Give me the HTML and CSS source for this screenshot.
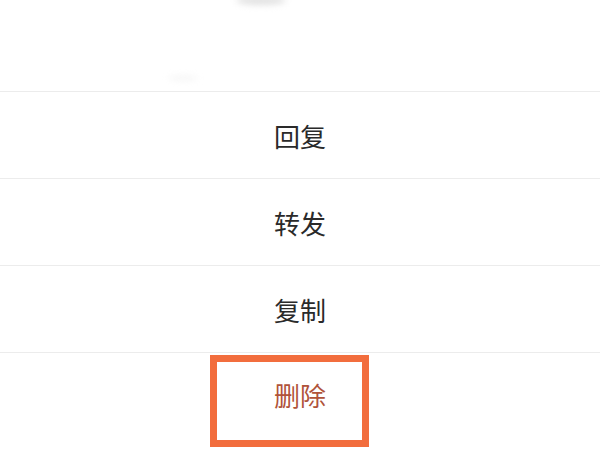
FILE: index.html
```html
<!DOCTYPE html>
<html lang="zh">
<head>
<meta charset="utf-8">
<link rel="stylesheet" href="styles.css">
</head>
<body>
<div class="sheet">
  <div class="top">
    <div class="smudge smudge-a"></div>
    <div class="smudge smudge-b"></div>
  </div>
  <div class="menu">
    <div class="item">回复</div>
    <div class="item">转发</div>
    <div class="item">复制</div>
    <div class="item danger">删除</div>
  </div>
  <div class="highlight"></div>
</div>
</body>
</html>
```

FILE: styles.css
```css
html, body {
  margin: 0;
  padding: 0;
  background: #ffffff;
}
.sheet {
  position: relative;
  width: 600px;
  height: 450px;
  overflow: hidden;
  background: #ffffff;
  font-family: "Noto Sans CJK SC", "Noto Sans", sans-serif;
}
.top {
  position: relative;
  height: 91px;
}
.smudge {
  position: absolute;
  border-radius: 50%;
  filter: blur(3px);
}
.smudge-a {
  left: 236px;
  top: -4px;
  width: 50px;
  height: 9px;
  background: #e2e2e2;
}
.smudge-b {
  left: 168px;
  top: 76px;
  width: 30px;
  height: 4px;
  background: #f3f3f3;
}
.menu {
  display: flex;
  flex-direction: column;
}
.item {
  height: 86px;
  border-top: 1px solid #ececec;
  display: flex;
  align-items: center;
  justify-content: center;
  font-size: 26px;
  color: #2a2a2a;
}
.item.danger {
  color: #b0533a;
  align-items: flex-start;
  padding-top: 23px;
  box-sizing: border-box;
}
.highlight {
  position: absolute;
  left: 210px;
  top: 355px;
  width: 145px;
  height: 78px;
  border: 7px solid #f26d3d;
}
```
